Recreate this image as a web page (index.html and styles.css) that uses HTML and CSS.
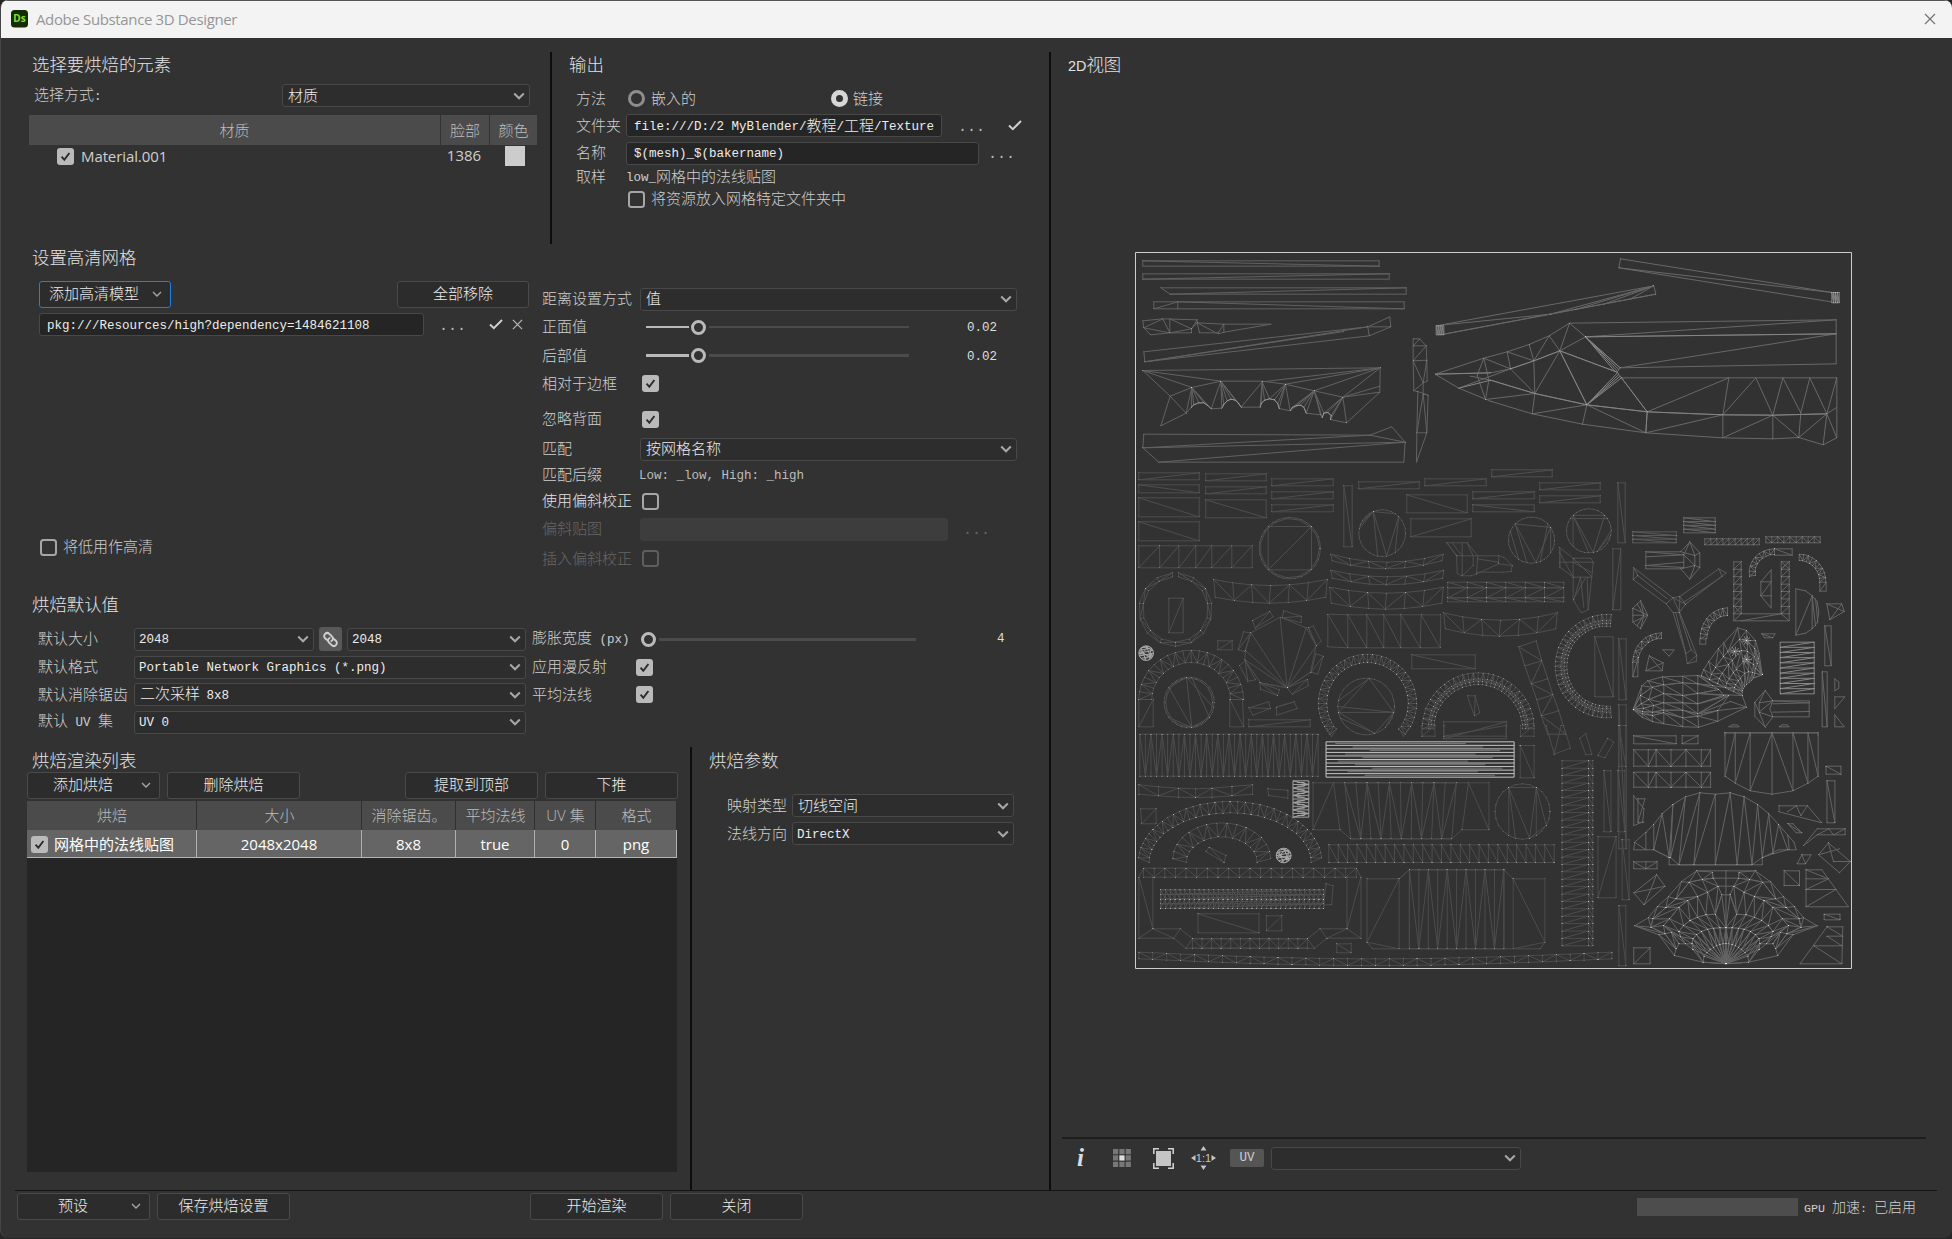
FILE: index.html
```html
<!DOCTYPE html>
<html lang="zh-CN">
<head>
<meta charset="utf-8">
<title>Adobe Substance 3D Designer</title>
<link rel="stylesheet" href="styles.css">
</head>
<body>
<svg class="defs" width="0" height="0">
  <symbol id="chev" viewBox="0 0 12 8"><path d="M1.2 1.5 6 6.3 10.8 1.5" fill="none" stroke="currentColor" stroke-width="2"/></symbol>
  <symbol id="chev-s" viewBox="0 0 10 6"><path d="M1 1 5 5 9 1" fill="none" stroke="currentColor" stroke-width="1.3"/></symbol>
  <symbol id="box-on" viewBox="0 0 17 17"><rect width="17" height="17" rx="3" fill="#bababa"/><path d="M4.6 8.6 7.3 11.8 12.4 5" fill="none" stroke="#2b2b2b" stroke-width="1.9"/></symbol>
  <symbol id="box-off" viewBox="0 0 17 17"><rect x="1" y="1" width="15" height="15" rx="2.5" fill="none" stroke="currentColor" stroke-width="2"/></symbol>
  <symbol id="tick" viewBox="0 0 14 11"><path d="M1 5.6 4.8 9.2 13 1" fill="none" stroke="currentColor" stroke-width="2"/></symbol>
  <symbol id="cross" viewBox="0 0 12 12"><path d="M1 1 11 11M11 1 1 11" fill="none" stroke="currentColor" stroke-width="1.3"/></symbol>
</svg>
<div class="window">
  <header class="titlebar">
    <svg class="logo" viewBox="0 0 17 18"><rect width="17" height="17.5" rx="3.5" fill="#152b00"/><text x="8.5" y="12.3" text-anchor="middle" font-family="Open Sans" font-weight="700" font-size="10" fill="#7ee22a">Ds</text></svg>
    <span class="title">Adobe Substance 3D Designer</span>
    <svg class="close"><use href="#cross"/></svg>
  </header>

  <main class="main">
    <section class="setup">
      <div class="top">
        <div class="elements">
          <h2>选择要烘焙的元素</h2>
          <div class="pick"><label>选择方式<b>:</b></label><div class="select"><span>材质</span><svg><use href="#chev"/></svg></div></div>
          <div class="materials">
            <div class="th">材质</div><div class="th">脸部</div><div class="th">颜色</div>
            <div class="mat"><svg class="cb"><use href="#box-on"/></svg>Material.001</div><div class="num">1386</div><div class="swatch"></div>
          </div>
        </div>
        <div class="vline"></div>
        <div class="output">
          <h2>输出</h2>
          <div class="form">
            <label>方法</label>
            <div class="cell radios"><i class="radio"></i><span>嵌入的</span><i class="radio on"></i><span>链接</span></div>
            <label>文件夹</label>
            <div class="cell"><div class="input folder"><b>file:///D:/2 MyBlender/</b>教程<b>/</b>工程<b>/Texture</b></div><span class="dots d1">...</span><svg class="tick t1"><use href="#tick"/></svg></div>
            <label>名称</label>
            <div class="cell"><div class="input name"><b>$(mesh)_$(bakername)</b></div><span class="dots d2">...</span></div>
            <label>取样</label>
            <div class="cell sample"><b>low_</b>网格中的法线贴图</div>
            <label></label>
            <div class="cell check"><svg class="cb"><use href="#box-off"/></svg><span>将资源放入网格特定文件夹中</span></div>
          </div>
        </div>
      </div>

      <div class="high">
        <div class="meshes">
          <h2>设置高清网格</h2>
          <div class="bar"><button class="btn focus"><span>添加高清模型</span><svg><use href="#chev-s"/></svg></button><button class="btn">全部移除</button></div>
          <div class="entry"><div class="input"><b>pkg:///Resources/high?dependency=1484621108</b></div><span class="dots">...</span><svg class="tick"><use href="#tick"/></svg><svg class="cross"><use href="#cross"/></svg></div>
          <div class="aslow"><svg class="cb"><use href="#box-off"/></svg>将低用作高清</div>
        </div>
        <div class="params">
          <label>距离设置方式</label><div class="cell"><div class="select"><span>值</span><svg><use href="#chev"/></svg></div></div>
          <label>正面值</label><div class="cell"><div class="slider"><i class="fill"></i><i class="knob"></i><i class="rest"></i></div><b class="val">0.02</b></div>
          <label>后部值</label><div class="cell"><div class="slider thick"><i class="fill"></i><i class="knob"></i><i class="rest"></i></div><b class="val">0.02</b></div>
          <label>相对于边框</label><div class="cell box"><svg class="cb"><use href="#box-on"/></svg></div>
          <label class="low">忽略背面</label><div class="cell box low"><svg class="cb"><use href="#box-on"/></svg></div>
          <label>匹配</label><div class="cell"><div class="select"><span>按网格名称</span><svg><use href="#chev"/></svg></div></div>
          <label>匹配后缀</label><div class="cell"><b class="suffix">Low: _low, High: _high</b></div>
          <label class="lit">使用偏斜校正</label><div class="cell box"><svg class="cb"><use href="#box-off"/></svg></div>
          <label class="off">偏斜贴图</label><div class="cell"><div class="input disabled"></div><span class="dots off">...</span></div>
          <label class="off">插入偏斜校正</label><div class="cell box off"><svg class="cb"><use href="#box-off"/></svg></div>
        </div>
      </div>

      <div class="defaults">
        <h2>烘焙默认值</h2>
        <div class="grid">
          <label>默认大小</label>
          <div class="cell size"><div class="select"><b>2048</b><svg><use href="#chev"/></svg></div>
            <button class="link"><svg viewBox="0 0 17 17" fill="none" stroke="#d0d0d0" stroke-width="1.9" stroke-linecap="round"><path d="M5.500 9.300 3 7.200a3 3 0 0 1 .1-4.300 3 3 0 0 1 4.200 0L10 5.500a2.700 2.700 0 0 1-.6 4.500"/><path d="M11.500 7.700 14 9.800a3 3 0 0 1-.1 4.300 3 3 0 0 1-4.200 0L7 11.500A2.700 2.700 0 0 1 7.600 7"/></svg></button>
            <div class="select"><b>2048</b><svg><use href="#chev"/></svg></div></div>
          <label>膨胀宽度<b> (px)</b></label>
          <div class="cell"><div class="slider dil"><i class="knob"></i><i class="rest"></i></div><b class="val">4</b></div>
          <label>默认格式</label><div class="cell"><div class="select"><b>Portable Network Graphics (*.png)</b><svg><use href="#chev"/></svg></div></div>
          <label>应用漫反射</label><div class="cell"><svg class="cb"><use href="#box-on"/></svg></div>
          <label>默认消除锯齿</label><div class="cell"><div class="select"><span>二次采样<b> 8x8</b></span><svg><use href="#chev"/></svg></div></div>
          <label>平均法线</label><div class="cell"><svg class="cb"><use href="#box-on"/></svg></div>
          <label>默认<b> UV </b>集</label><div class="cell"><div class="select"><b>UV 0</b><svg><use href="#chev"/></svg></div></div>
        </div>
      </div>

      <div class="render">
        <div class="list">
          <h2>烘焙渲染列表</h2>
          <div class="bar"><button class="btn menu"><span>添加烘焙</span><svg><use href="#chev-s"/></svg></button><button class="btn">删除烘焙</button><button class="btn up">提取到顶部</button><button class="btn">下推</button></div>
          <div class="table">
            <div class="tr head"><div>烘焙</div><div>大小</div><div>消除锯齿。</div><div>平均法线</div><div>UV 集</div><div>格式</div></div>
            <div class="tr row"><div><svg class="cb"><use href="#box-on"/></svg>网格中的法线贴图</div><div>2048x2048</div><div>8x8</div><div>true</div><div>0</div><div>png</div></div>
          </div>
        </div>
        <div class="vline"></div>
        <div class="bakeparams">
          <h2>烘焙参数</h2>
          <div class="pair"><label>映射类型</label><div class="select"><span>切线空间</span><svg><use href="#chev"/></svg></div></div>
          <div class="pair"><label>法线方向</label><div class="select"><b>DirectX</b><svg><use href="#chev"/></svg></div></div>
        </div>
      </div>
    </section>

    <div class="vline side"></div>

    <section class="view">
      <h2><span class="dim">2D</span>视图</h2>
      <svg id="uv" class="uv" width="730" height="730" viewBox="0 0 730 730">
        <marker id="node" markerUnits="userSpaceOnUse" markerWidth="3" markerHeight="3" refX="1.500" refY="1.500"><rect width="3" height="3" fill="#fff" fill-opacity=".2"/></marker>
      </svg>
      <div class="tools">
        <span class="info">i</span>
        <svg class="ic-grid" viewBox="0 0 19 19"><g fill="#777"><path d="M0 0h5.500v5.500H0zM6.700 0h5.500v5.500H6.700zM13.400 0h5.500v5.500h-5.500zM0 6.700h5.500v5.500H0zM13.400 6.700h5.500v5.500h-5.500zM0 13.400h5.500v5.500H0zM6.700 13.400h5.500v5.500H6.700zM13.400 13.400h5.500v5.500h-5.500z"/></g><path d="M6.700 6.700h5.500v5.500H6.700z" fill="#e0e0e0"/></svg>
        <svg class="ic-fit" viewBox="0 0 21 21"><path d="M3 3h15v15H3z" fill="#c4c4c4"/><path d="M.8 6V.8H6M15 .8h5.200V6M20.200 15v5.200H15M6 20.200H.8V15" fill="none" stroke="#d4d4d4" stroke-width="1.500"/></svg>
        <svg class="ic-one" viewBox="0 0 25 24"><path d="M12.500 0l3 4.500h-6zM12.500 24l3-4.500h-6zM0 12l4.500-3v6zM25 12l-4.500-3v6z" fill="#c4c4c4"/><text x="12.500" y="16" text-anchor="middle" font-family="Liberation Sans" font-size="11" fill="#c4c4c4">1:1</text></svg>
        <span class="uvbtn">UV</span>
        <div class="select"><span></span><svg><use href="#chev"/></svg></div>
      </div>
    </section>
  </main>

  <footer class="footer">
    <button class="btn menu"><span>预设</span><svg><use href="#chev-s"/></svg></button>
    <button class="btn">保存烘焙设置</button>
    <button class="btn start">开始渲染</button>
    <button class="btn">关闭</button>
    <div class="progress"></div>
    <span class="gpu"><b>GPU </b>加速<b>: </b>已启用</span>
  </footer>
</div>
<script src="uv.js"></script>
</body>
</html>
```
FILE: styles.css
```css
* { box-sizing: border-box; }
body {
  margin: 0; width: 1952px; height: 1239px; overflow: hidden; background: #262626;
  font: 300 15px/20px "Liberation Sans", "Noto Sans CJK SC", sans-serif; color: #cfcfcf;
}
.defs { position: absolute; }
.window { height: 1238px; background: #323232; border-radius: 8px; overflow: hidden; border-left: 1px solid #454545; display: flex; flex-direction: column; }
b { font: 400 12.5px/20px "Liberation Mono", monospace; white-space: pre; }
h2 { margin: 0; height: 26px; font-size: 17.4px; line-height: 26px; font-weight: 300; color: #e2e2e2; }
svg { display: block; flex: none; }
label { white-space: nowrap; }

.titlebar { height: 38px; flex: none; background: #f3f3f3; border-top: 1px solid #555; display: flex; align-items: center; padding: 0 16px 2px 10px; }
.logo { width: 17px; height: 18px; }
.title { margin-left: 8px; font: 400 15px/20px "Open Sans", "Noto Sans", sans-serif; color: #969696; letter-spacing: -.36px; flex: 1; }
.close { width: 12px; height: 12px; color: #777; }

.main { display: flex; height: 1152px; flex: none; }
.setup { width: 1048px; flex: none; }
.vline { width: 2px; background: #0d0d0d; flex: none; }
.side { margin-top: 14px; }

.select, .input { height: 23px; border: 1px solid #484848; border-radius: 3px; background: #2d2d2d; color: #ececec; display: flex; align-items: center; white-space: nowrap; }
.select { justify-content: space-between; padding: 0 4px 0 5px; }
.select svg { width: 12px; height: 8px; color: #a8a8a8; }
.select b { margin-left: -1px; }
.select > b, .input > b, .cell > b { padding-top: 2px; }
.input { background: #252525; padding-left: 7px; }
.btn { width: 132px; height: 27px; padding: 0 0 1px; border: 1px solid #4a4a4a; border-radius: 3px; background: #2c2c2c; color: #ececec; font: inherit; display: flex; align-items: center; justify-content: center; flex: none; }
.btn svg { width: 10px; height: 6px; color: #a8a8a8; }
.btn.focus { border-color: #1c80e4; justify-content: space-between; padding: 0 8px 1px 9px; }
.btn.menu { justify-content: flex-end; padding-right: 8px; }
.btn.menu svg { margin-left: 28px; }
.cb { width: 17px; height: 17px; color: #a6a6a6; }
.tick { width: 14px; height: 11px; color: #d0d0d0; }
.dots { font: 400 15px/20px "Liberation Mono", monospace; color: #bbb; width: 27px; padding-top: 4px; }
.cell { display: flex; align-items: center; }

.top { height: 206px; padding-top: 14px; display: flex; }
.elements { width: 549px; padding-left: 27px; }
.elements h2 { padding-left: 4px; }
.pick { display: flex; align-items: center; margin-top: 6px; height: 23px; padding-left: 6px; }
.pick label { width: 248px; }
.pick .select { width: 248px; }
.materials { margin-top: 8px; display: grid; grid-template-columns: 411px 48px 47px; grid-template-rows: 30px 22px; width: 509px; column-gap: 1px; padding-left: 1px; font-family: "Open Sans", "Noto Sans CJK SC", sans-serif; }
.th { background: #4b4b4b; line-height: 30px; text-align: center; color: #bdbdbd; }
.mat { display: flex; align-items: center; padding: 0 0 0 28px; gap: 7px; font-weight: 400; letter-spacing: -.1px; line-height: 20px; }
.num { font-weight: 400; text-align: center; line-height: 21px; padding-right: 2px; }
.swatch { width: 20px; height: 20px; margin: 1px 0 0 15px; background: #ccc; }

.output { padding-left: 17px; }
.output h2 { margin-bottom: 7px; }
.form { display: grid; grid-template-columns: 50px 420px; grid-template-rows: 27px 27px 28px 20px 24px; align-items: center; padding-left: 7px; }
.radio { width: 17px; height: 17px; border: 3px solid #8e8e8e; border-radius: 50%; margin: 0 6px 0 2px; }
.radio.on { border: 5px solid #d6d6d6; margin-left: 135px; margin-right: 5px; }
.folder { width: 316px; }
.form .name { width: 353px; }
.d1 { margin-left: 16px; }
.t1 { margin-left: 23px; }
.d2 { margin-left: 9px; }
.check { padding-left: 2px; gap: 6px; }

.high { height: 347px; display: flex; }
.meshes { width: 541px; }
.meshes h2 { padding-left: 31px; margin-top: 1px; }
.meshes .bar { display: flex; justify-content: space-between; margin: 10px 13px 0 38px; }
.entry { display: flex; align-items: center; margin: 5px 0 0 38px; height: 23px; }
.entry .input { width: 385px; }
.entry .dots { margin-left: 15px; }
.entry .tick { margin-left: 23px; }
.cross { width: 11px; height: 11px; color: #bbb; margin-left: 9px; }
.aslow { display: flex; align-items: center; gap: 6px; margin: 201px 0 0 39px; }
.params { display: grid; grid-template-columns: 98px 378px; grid-template-rows: 28px 28px 29px 27px 41px 22px 30px 22px 34px 25px; align-items: center; align-content: start; padding-top: 41px; }
.params .select { width: 377px; }
.params .box { padding-left: 2px; }
.params .low { padding-top: 3px; }
.params .input { width: 308px; }
.params .disabled { background: #3d3d3d; border-color: #3d3d3d; }
.params .off { color: #666; }
.params .dots.off { margin-left: 15px; }
.box.off .cb { color: #5e5e5e; }
.params .lit { color: #e4e4e4; }
.suffix { color: #bdbdbd; margin-left: -1px; }
.slider { width: 263px; margin-left: 6px; display: flex; align-items: center; }
.slider i { height: 2px; background: #4b4b4b; }
.slider.thick i { height: 3px; }
.slider i.fill { width: 43px; background: #bababa; }
.slider i.knob { width: 15px; height: 15px; border: 3px solid #bababa; border-radius: 50%; background: none; margin: 0 3px 0 2px; }
.slider i.rest { flex: 1; }
.val { margin-left: 58px; color: #ddd; }

.defaults { height: 156px; padding-top: 1px; }
.defaults h2 { padding-left: 31px; margin-bottom: 7px; }
.defaults .grid { display: grid; grid-template-columns: 96px 398px 104px 400px; grid-template-rows: 28px 28px 27px 28px; align-items: center; padding-left: 37px; }
.defaults .select { width: 392px; }
.defaults .size .select { width: 180px; }
.defaults .size .select:last-child { width: 179px; }
.link { width: 23px; height: 24px; margin: 0 5px; padding: 3px; border: 0; border-radius: 3px; background: #585858; }
.link svg { width: 17px; height: 17px; }
.slider.dil { width: 277px; margin-left: 3px; }
.slider.dil i.rest { height: 3px; }
.defaults .cell > .val { margin-left: 81px; padding: 0; }

.render { display: flex; height: 443px; }
.list { width: 689px; padding-left: 26px; }
.list h2 { padding: 1px 0 0 5px; height: 25px; }
.list .bar { display: flex; gap: 7px; }
.list .btn { width: 133px; }
.list .up { margin-left: 98px; }
.table { margin-top: 2px; width: 650px; height: 371px; background: #252525; font: 400 15px/28px "Open Sans", "Noto Sans CJK SC", sans-serif; }
.tr { display: grid; grid-template-columns: 170px 165px 94px 79px 61px 81px; text-align: center; }
.tr.head { color: #bdbdbd; background: #4b4b4b; line-height: 29px; font-weight: 300; }
.tr.head div { border-right: 1px solid #303030; padding-left: 1px; white-space: nowrap; }
.tr.row { color: #fff; background: #656565; border-bottom: 1px solid #b4b4b4; height: 28px; }
.tr.row div { border-right: 1px solid #b0b0b0; display: flex; align-items: center; justify-content: center; white-space: nowrap; }
.tr.row div:first-child { justify-content: flex-start; padding-left: 4px; gap: 6px; }
.bakeparams { padding: 0 0 0 17px; }
.bakeparams h2 { padding-top: 1px; margin-bottom: 21px; }
.pair { display: flex; align-items: center; height: 23px; padding-left: 18px; margin-bottom: 5px; }
.pair label { width: 65px; }
.pair .select { width: 222px; }

.view { flex: 1; padding: 14px 26px 0 11px; }
.view h2 { padding-left: 6px; }
.dim { font-size: 14.4px; }
.uv { margin: 167px 0 0 68px; }
.tools { margin-top: 162px; border-top: 2px solid #1e1e1e; height: 40px; display: flex; align-items: center; }
.info { width: 14px; margin-left: 15px; font: italic 700 25px/24px "Liberation Serif", serif; color: #ddd; }
.ic-grid { width: 18px; height: 18px; margin-left: 22px; }
.ic-fit { width: 21px; height: 21px; margin-left: 22px; }
.ic-one { width: 25px; height: 24px; margin-left: 17px; }
.uvbtn { width: 34px; height: 18px; margin-left: 14px; border-radius: 2px; background: #555; font: 400 12.5px/18px "Liberation Mono", monospace; text-align: center; }
.tools .select { width: 250px; margin-left: 7px; }

.footer { margin: 0 15px 0 14px; border-top: 1px solid #151515; height: 46px; display: flex; align-items: flex-start; padding: 2px 22px 0 2px; }
.footer .btn { width: 133px; margin-right: 7px; }
.footer .btn.menu svg { margin-left: 43px; }
.footer .start { margin-left: 233px; }
.progress { width: 161px; height: 18px; margin: 5px 6px 0 auto; background: #4d4d4d; }
.gpu { margin: 4px -1px 0 0; width: 112px; white-space: nowrap; font-size: 14px; }
.gpu b { font-size: 11.67px; }
```
FILE: uv.js
```js
// UV layout wireframe. Every sheet has its own origin and scale.
const NS = "http://www.w3.org/2000/svg";
const root = document.getElementById("uv");
let d = "";
const r1 = v => Math.round(v * 10) / 10;
const line = (...p) => { d += "M" + p.map(r1).join(" "); };
const raw = s => { d += s; };
const box = (x1, y1, x2, y2, k) => {
  d += `M${x1} ${y1}H${x2}V${y2}H${x1}z`;
  if (k === "/") line(x1, y2, x2, y1);
  if (k === "\\") line(x1, y1, x2, y2);
};
// triangulated strip between two equally long point lists
const strip = (a, b, flip) => {
  line(...a.flat()); line(...b.flat());
  a.forEach((p, i) => {
    line(...p, ...b[i]);
    if (i) (flip === 2 ? i % 2 : flip) ? line(...a[i - 1], ...b[i]) : line(...b[i - 1], ...p);
  });
};
const lerp = (x1, y1, x2, y2, n) => Array.from({ length: n + 1 }, (_, i) => [x1 + (x2 - x1) * i / n, y1 + (y2 - y1) * i / n]);
const hstrip = (x1, y1, x2, y2, n, f) => strip(lerp(x1, y1, x2, y1, n), lerp(x1, y2, x2, y2, n), f);
const vstrip = (x1, y1, x2, y2, n, f) => strip(lerp(x1, y1, x1, y2, n), lerp(x2, y1, x2, y2, n), f);
const ring = (cx, cy, rx, ry, a, b, n) => Array.from({ length: n + 1 }, (_, i) => {
  const t = (a + (b - a) * i / n) * Math.PI / 180;
  return [cx + rx * Math.cos(t), cy + ry * Math.sin(t)];
});
const band = (cx, cy, ro, ri, a, b, n, f, k = 1) => strip(ring(cx, cy, ro, ro * k, a, b, n), ring(cx, cy, ri, ri * k, a, b, n), f);
const disc = (cx, cy, rx, ry, n, chords = []) => {
  const p = ring(cx, cy, rx, ry, 0, 360, n);
  line(...p.flat());
  chords.forEach(([i, j]) => line(...p[i], ...p[j]));
};
const fan = (x, y, pts) => pts.forEach(p => line(x, y, ...p));
const sheet = (x, y, sx, sy, tone, nodes = true) => {
  const p = document.createElementNS(NS, "path");
  p.setAttribute("d", d);
  p.setAttribute("transform", `translate(${x + .5} ${y + .5}) scale(${sx} ${sy})`);
  p.setAttribute("vector-effect", "non-scaling-stroke");
  p.setAttribute("fill", "none");
  p.setAttribute("stroke", tone);
  if (nodes) ["start", "mid", "end"].forEach(m => p.setAttribute("marker-" + m, "url(#node)"));
  root.append(p);
  d = "";
};
const T = 1 / 3, W = 730 / 1568;

// long blades
box(37, 46, 746, 62, "\\"); box(37, 85, 776, 101, "/");
raw("M91 127H827V146H119zM119 146 827 127M70 169H821V190H70zM70 190 142 169V190M142 169 821 190");
raw("M37 226 97 220 200 223V232L280 236H422L281 260 263 265 200 232 183 250V262H118L60 268 40 247zM40 247 97 220 118 262V220L183 250 200 223M118 262 183 250M200 232 207 262H263L280 236V260M40 247 118 262");
raw("M40 319 712 244 778 214 781 244 716 271 43 349zM43 349 712 244 716 271M712 244H781M43 349 640 258");
const base = [[91,541],[167,503],[183,485],[190,478],[205,472],[220,472],[232,480],[242,490],[274,488],[280,477],[290,466],[302,461],[314,464],[324,473],[332,485],[389,485],[392,474],[402,464],[417,460],[432,463],[442,475],[446,489],[479,496],[486,485],[498,481],[510,479],[520,485],[527,503],[570,508],[575,517],[580,503],[592,501],[602,510],[600,522],[648,532]];
line(...base.flat());
fan(184, 426, base.slice(1, 8)); fan(271, 407, base.slice(7, 15)); fan(395, 409, base.slice(14, 19));
fan(465, 416, base.slice(18, 23)); fan(551, 436, base.slice(22, 31)); fan(637, 455, base.slice(30, 35));
raw("M37 375 749 367 748 440 648 532M37 375 119 452 184 426 271 407H395L465 416 551 436 637 455 749 367M37 375 184 426M37 375 271 407M749 367 395 409M749 367 465 416M749 367 551 436M91 541 119 452 167 503M637 455 748 422M637 455 748 440");
raw("M40 566 718 569 784 544 824 590 820 650H85L37 607zM37 607 718 569 824 590M37 607 824 590M85 650 824 590");
raw("M848 280H867L887 301 889 344 890 407 878 412V446L893 449 889 562 858 650 859 562 862 438 850 436 848 346zM848 301H887M848 301 867 281M848 346 887 301M848 346 889 344M848 346 878 412 889 344M850 436 878 412M862 438 893 449M878 446 859 562H889L878 446");
sheet(0, 0, T, T, "#626262");

// bright rims of the small arches
line(...base.slice(2, 8).flat()); line(...base.slice(8, 15).flat()); line(...base.slice(15, 22).flat()); line(...base.slice(22, 28).flat()); line(...base.slice(29, 34).flat());
sheet(0, 0, T, T, "#929292");

// sword
raw("M-163 241 490 121 496 146 -140 266M-140 238 180 206 490 121M255 192 490 121M340 176 490 121M415 163 490 121M-140 266 180 206 496 146");
raw("M390 40 1025 141M385 67 1022 169M390 40 385 67 1025 141");
raw("M-166 386 -20 338 50 319 116 297 176 271 237 233 285 274 389 367 380 380 393 397 470 499 466 562 276 536 125 505 0 467 -95 428zM-20 338 60 370 50 319 130 346 116 297M130 346 176 271 208 316 237 233M208 316 285 274M60 370 130 346 208 316 380 380 M60 370 133 444 130 346M133 444 208 316 289 478M0 404 133 444 289 478 470 499 697 508 847 509 1009 505 1037 487M-95 428 60 370M-166 386 0 382 60 370M-20 338 -40 390 -15 462M-20 338 -5 404 -15 462M0 404 -60 392M-15 462 133 444 125 505 289 478 276 536M289 478 466 562 697 508M237 233 1037 223V355L389 367 1037 265 285 274 1037 223M393 397H1039V577L998 598 925 576 847 580 697 577 466 562M470 499 715 397 697 508 796 397 847 509 877 397 931 502 958 397 1009 505 1039 397M697 508V577L847 509V580M847 509 925 576 1009 505 998 598M931 502 925 576M1009 505 1039 577");
sheet(360, 0, T, T, "#686868");
hstrip(-163, 241, -140, 268, 4, 1); hstrip(1024, 141, 1046, 172, 4, 1);
for (let i = 0; i < 4; i++) { line(285, 274, 389 - i * 5, 367 + i * 4); line(289, 478, 393 - i * 4, 397 - i * 5); }
raw("M-166 386 0 382M-95 428 0 404 133 444 289 478 470 499 697 508 847 509 1009 505M208 316 289 478M60 370 130 346 208 316 380 380M285 274 1037 265M470 499 466 562M393 397 470 499");
sheet(360, 0, T, T, "#858585");

// middle left
box(25, 22, 206, 43, "/"); box(226, 25, 407, 46, "/"); box(424, 40, 608, 61, "/"); box(685, 49, 866, 70, "/"); box(883, 40, 1067, 61, "/");
box(25, 58, 206, 82, "\\"); box(226, 64, 407, 85, "/"); box(424, 79, 608, 100, "/"); box(424, 118, 608, 139, "/");
box(25, 97, 206, 154, "\\"); box(226, 103, 407, 157, "\\"); box(25, 169, 206, 226, "\\"); box(829, 88, 1010, 142, "\\"); box(841, 160, 1022, 214, "/");
box(640, 61, 665, 244, "\\"); box(844, 568, 1034, 610, "\\"); box(262, 526, 305, 553, "/"); box(355, 763, 539, 784, "/"); box(115, 398, 158, 502, "/"); box(940, 769, 1127, 820, "/");
strip([[25,241],[87,241],[145,241],[196,241],[244,241],[304,241],[365,241]], [[25,307],[88,307],[145,307],[196,307],[244,307],[304,307],[365,307]], 0);
disc(478, 248, 92, 92, 32, [[4,12],[20,28],[12,20],[28,4],[28,12]]); disc(478, 248, 89, 89, 15);
disc(755, 203, 70, 70, 32, [[22,7],[22,18],[22,17],[28,7],[28,5],[22,27],[22,19],[22,9]]);
disc(176, 711, 75, 76, 30, [[18,22],[18,7],[22,7],[12,7],[23,3],[22,1],[3,7]]); disc(176, 711, 70, 73, 20);
disc(707, 723, 85, 85, 30, [[14,1],[1,23],[23,14],[15,1],[23,16],[13,6],[14,6],[6,1],[1,4]]);
band(135, 432, 110, 98, -85, 265, 14, 2);
band(182, 702, 157, 118, 180, 360, 20, 2, .94); raw("M25 702V784H68L68 702M25 784 68 702M298 702V784H340L336 702M340 784 298 702");
band(711, 713, 147, 122, 140, 400, 46, 2); band(1043, 790, 168, 133, 180, 360, 34, 2); band(1043, 790, 150, 142, 180, 360, 34, 1);
const arc = (x1, x2, y, sag, h, n) => { const f = (o) => Array.from({ length: n + 1 }, (_, i) => { const t = i / n; return [x1 + (x2 - x1) * t + (o ? (t < .5 ? 4 : -4) : 0), y + sag * 4 * t * (1 - t) + o]; }); strip(f(0), f(h), 2); };
arc(250, 590, 342, 18, 53, 6); arc(601, 938, 266, 24, 20, 6); arc(601, 940, 314, 20, 24, 6); arc(598, 938, 365, 18, 48, 6);
strip([[592,446],[652,448],[709,448],[760,448],[811,448],[872,448],[931,448]], [[592,544],[652,547],[709,547],[760,547],[811,547],[869,547],[929,547]], 1);
arc(940, 1280, 442, 22, 48, 6); raw("M949 232H1010L1042 271 1038 325 1022 331H992L980 323 978 271zM949 232 980 271M965 232 995 271M995 232V331M980 271H1105L1104 295 1037 326M1040 280 1104 290M1010 232 1028 271V300L995 331M1105 271 1120 275 1145 300 1142 318 1120 320H1037M1105 295 1145 300");
hstrip(952, 367, 1300, 397, 6, 0); hstrip(952, 350, 1300, 367, 6, 1); hstrip(952, 397, 1300, 409, 6, 1);
// scalloped disc with loose tabs
const rim = [[470,667],[390,652],[343,583],[345,555],[361,502],[449,455],[527,487],[557,541],[540,620],[470,667]];
line(...rim.flat()); fan(470, 667, rim);
raw("M366 465 418 438 428 454 374 488zM374 488 418 438M460 436 512 452V472L455 457zM455 457 512 452M534 487 548 481 572 527 558 541zM534 487 558 541M578 572 562 626 542 620 556 565zM578 572 542 620M470 667 531 641 533 661 485 686zM485 686 531 641M388 652 390 671 441 690 447 673zM388 652 441 690M344 586 327 600 352 647 375 643zM344 586 352 647M361 502 339 499 323 553 343 558zM361 502 323 553");
raw("M355 727 415 709 419 729 367 749zM355 727 419 729M437 725 491 709 500 729 439 749zM437 725 491 709M1010 691H1034L1048 742 1032 751zM1034 691 1032 751");
sheet(0, 220, T, T, "#4e4e4e");

// middle right, dim parts
box(4, 13, 185, 34, "/"); box(-53, 79, 131, 100, "/"); box(-53, 118, 131, 139, "\\"); box(148, 52, 329, 73, "/"); box(148, 91, 329, 112, "/");
box(382, 52, 404, 232, "\\"); box(367, 250, 391, 433, "/"); box(313, 514, 368, 694, "\\"); box(385, 520, 407, 703, "\\"); box(385, 718, 407, 1150, "\\");
disc(123, 224, 69, 69, 32, [[20,29],[20,7],[29,7],[20,9],[28,6],[29,3],[18,11]]);
disc(295, 196, 67, 66, 32, [[20,28],[20,7],[28,7],[20,8],[20,12],[0,6],[1,6],[19,29]]);
band(349, 602, 155, 120, 85, 275, 36, 2); band(349, 602, 138, 128, 85, 275, 36, 1);
strip([[85,544],[103,601],[122,655],[139,703],[152,751],[172,806]], [[137,526],[154,586],[172,640],[187,688],[205,736],[226,806]], 2);
raw("M208 247 248 278H301L308 290 305 322 293 433 272 442 248 403V335L208 305zM208 290H308M208 247V305M248 278V335H305L248 278M208 262 248 335M250 403 270 335 280 425M248 290 301 320M290 335 293 433M248 403 283 340");
sheet(360, 220, T, T, "#505050");
raw("M430 307 547 397 568 393 685 310 707 322 585 416 567 440 619 569 617 588 590 595 586 565 548 442 527 415 428 342zM430 307 442 330 530 400M442 330 428 342M527 415 547 397 585 416M548 442 567 440 568 393 585 416M547 397 567 440M685 310 695 333 580 410M556 442 586 565 602 553 619 569 590 595M565 440 602 553");
vstrip(427, 199, 557, 232, 3, 1);
sheet(360, 220, T, T, "#5a5a5a");

// middle right, lighter parts
vstrip(580, 157, 674, 202, 4, 1); hstrip(643, 220, 806, 238, 9, 0); hstrip(826, 214, 989, 232, 9, 2);
raw("M466 259H571L598 229 628 262V306L598 341 571 310H466zM466 274 580 268M466 300 580 290M466 259 580 268V306L466 300M571 259 613 270V300L571 310M598 229 613 270 628 262M598 341 613 300 628 306M580 268 613 300M598 229 580 268");
raw("M427 428 450 406 472 449 450 490 427 470zM427 428 472 449 427 470M440 415 460 449 440 480M450 406 460 449 450 490M427 449H460");
band(711, 520, 82, 62, 180, 270, 9, 2, 1.13); raw("M628 520V536H646V520");
band(513, 590, 86, 70, 180, 270, 8, 2, 1.02); raw("M427 580V634H442V580L427 634");
band(852, 320, 76, 58, 170, 270, 8, 2, .92); box(852, 250, 905, 269, "\\"); band(926, 350, 80, 62, 270, 360, 9, 2, 1.05); raw("M988 350V377H1007V350L988 377");
vstrip(730, 289, 752, 445, 7, 0); vstrip(872, 289, 896, 445, 7, 0); raw("M730 445V466H896V445M752 445H872M730 466 752 445 730 420M896 466 872 445M752 466 872 445M872 289 896 310M872 310 896 289");
raw("M842 313V428L811 391V349zM811 349H842L811 391H842M916 370 945 376 965 391 980 408 985 440 980 472 965 490 945 503 916 509zM916 509 965 391V490M965 391 975 480M975 400 982 470M1009 415H1054L1061 438 1018 463zM1054 415 1018 463M1009 415 1061 438M517 553H551L536 572zM476 571 518 592 515 616H466zM476 571 515 616M466 616 518 592M814 505H854L847 517H822zM814 505 847 517");
box(1003, 481, 1022, 601, "\\"); box(995, 619, 1010, 784, "\\"); raw("M1033 640 1045 650V668L1033 676zM1033 694H1063L1033 730zM1033 748V784H1061zM715 784 725 778H740L746 784zM866 784 876 778H890L896 784z");
const rib = [[[428,732],[454,661],[472,646],[515,634],[577,632],[622,630],[632,632]],[[428,732],[450,690],[485,665],[520,658],[577,652],[622,655],[665,660]],[[428,732],[452,715],[475,702],[520,684],[577,690],[622,684],[685,672]],[[428,732],[460,728],[490,720],[520,712],[577,712],[622,715],[700,690]],[[428,732],[455,738],[485,740],[520,734],[577,734],[622,745],[715,690]],[[428,732],[455,745],[485,750],[520,742],[577,757],[622,752],[682,735]],[[428,732],[455,755],[485,768],[520,775],[577,784],[625,785],[682,767]]];
for (let i = 1; i < rib.length; i++) strip(rib[i - 1], rib[i], 1);
raw("M682 767 768 725 755 690 715 672M682 735 768 725M622 684 755 690M622 745 720 708 768 725M665 660 755 675M632 632 715 672");
const outer = [[632,630],[640,612],[655,588],[684,549],[700,532],[742,487],[768,495],[795,525],[806,565],[815,628]];
const inner = [[755,690],[755,680],[756,675],[758,670],[762,664],[768,657],[776,650],[784,644],[790,637],[815,628]];
for (let k = 0; k < 5; k++) { const m = t => outer.map((p, i) => [p[0] + (inner[i][0] - p[0]) * t, p[1] + (inner[i][1] - p[1]) * t]); strip(m(k / 5), m((k + 1) / 5), k % 2); }
raw("M793 710 824 675 847 706H956V754H847L824 785 793 752zM806 712V740L847 754M824 675 806 712 847 706 806 740 824 785M847 706 838 730 847 754M793 710 806 740M847 715 956 712M847 740 956 738M847 706 956 712");
raw("M703 802H983V812M703 802V812M780 802V812M844 802V812M907 802V812");
sheet(360, 220, T, T, "#656565");
vstrip(869, 530, 971, 685, 10, 0);
[[733,558,14],[768,582,14],[768,525,13]].forEach(([x, y, r]) => fan(x, y, ring(x, y, r, r, 0, 360, 9)));
sheet(360, 220, T, T, "#858585");

// lower left
hstrip(20, 26, 403, 152, 32, 2);
raw("M392 172H770V313H712L690 340H473L450 313H392zM392 313 436 172 450 313M712 313 726 172 770 313");
strip(lerp(460, 172, 700, 172, 10), lerp(473, 340, 690, 340, 10), 2);
hstrip(426, 358, 910, 411, 24, 1); vstrip(927, 106, 984, 661, 25, 0); vstrip(984, 106, 993, 661, 25, 1);
strip([[18,178],[60,184],[103,188],[140,190],[175,188],[218,183],[262,178]], [[18,206],[60,211],[103,215],[140,216],[175,215],[218,211],[262,206]], 2);
disc(842, 258, 59, 83, 24, [[16,20],[16,5],[20,5],[20,4],[16,7],[16,8],[20,2],[5,2]]);
strip(ring(214, 410, 197, 182, 184, 356, 36), ring(214, 410, 174, 148, 180, 360, 36), 2);
strip(ring(196, 400, 105, 108, 180, 360, 15), ring(196, 410, 76, 76, 180, 360, 15), 2);
hstrip(28, 428, 485, 455, 20, 2); raw("M28 428 18 455V638L48 610V455M485 428 495 455V638L465 610V455M18 455 48 610M495 455 465 610M48 610H107L133 640H380L407 610H465M18 638H93L107 610M48 610 93 638 119 668H395L422 638H495M407 610 422 638M465 610 422 638M133 640 119 668M380 640 395 668");
hstrip(133, 640, 380, 668, 12, 2); box(145, 565, 276, 622, "\\"); box(292, 571, 325, 616, "/"); box(443, 655, 474, 682, "\\"); raw("M420 475 435 481 432 538H415zM169 365 205 390 201 411 162 378zM169 365 201 411");
raw("M508 460H577L599 433H802L822 460H890V650L880 670H520L508 650zM508 650 577 460V670M822 460 890 650 822 670zM508 650 577 670M577 460 599 433V670M802 433V670");
strip(lerp(599, 433, 802, 433, 10), lerp(599, 670, 802, 670, 10), 2);
const wave = o => Array.from({ length: 35 }, (_, i) => [18 + 1016 * i / 34, 680 + 20 * Math.sin(Math.PI * i / 34) + o]);
strip(wave(0), wave(20), 2);
box(837, 60, 867, 157, "\\"); box(1017, 136, 1032, 319, "\\"); box(1047, 136, 1062, 319, "\\"); box(1004, 334, 1043, 517, "/"); box(1056, 343, 1071, 523, "\\"); box(1049, 541, 1064, 721, "\\"); box(1049, 0, 1064, 122, "\\");
raw("M295 190 338 194V218L297 210zM22 250H55V295H24zM24 295 55 250M965 38 978 25 991 86 978 88zM1025 38 1038 50 1019 97 1004 90zM673 0V32H807V0L673 32M838 0V32H867V0L838 32M626 0V32H654V0L626 32M893 0 910 86 945 68 930 0M910 86 925 0M422 8 432 32 443 10M576 8 586 32 597 10");
sheet(0, 480, W, T, "#4c4c4c");
vstrip(65, 493, 415, 549, 4, 0); hstrip(65, 493, 415, 521, 34, 1); hstrip(65, 521, 415, 549, 34, 0);
sheet(0, 480, W, T, "#505050");

// dense horizontal slats
for (let i = 0; i < 10; i++) { const y = 54 + i * 10.6, o = i * 37 % 90; line(440 + o, y, 720 + o, y); }
sheet(0, 480, W, T, "#757575", false);
box(420, 49, 824, 155);
for (let i = 1; i < 10; i++) line(420, 49 + i * 10.6, 824, 49 + i * 10.6);
sheet(0, 480, W, T, "#c4c4c4", false);
vstrip(349, 166, 383, 275, 10, 2); for (let i = 0; i < 10; i++) line(358, 171 + i * 11, 374, 171 + i * 11);
sheet(0, 480, W, T, "#a2a2a2", false);

// small shaded spheres
const knots = [[0,7],[1,6],[15,8],[14,9],[13,10],[2,12],[4,10],[3,14],[5,0],[9,2],[11,15],[8,1],[7,13]];
disc(47, 563, 22, 22, 16, knots); sheet(0, 220, T, T, "#a8a8a8", false);
disc(329, 390, 16, 22, 16, knots); sheet(0, 480, W, T, "#a8a8a8", false);

// lower right
box(1081, 31, 1172, 55, "\\"); box(1185, 31, 1219, 55, "/"); box(1494, 122, 1526, 146, "\\"); box(1496, 166, 1513, 292, "\\");
const cuts = [1081, 1112, 1129, 1161, 1193, 1226, 1246];
strip(cuts.map(x => [x, 73]), cuts.map(x => [x, 122]), 2);
strip(cuts.map(x => [x, 140]), cuts.map(x => [x, 185]), 2);
raw("M1277 22H1477V152L1455 173 1423 196 1378 206 1331 196 1299 173 1277 152zM1277 152 1299 22V173L1331 22V196L1378 22V206M1378 22 1423 196 1423 22 1455 173V22L1477 152");
const dome = [[1124,297],[1142,265],[1165,237],[1192,214],[1223,202],[1256,206],[1288,202],[1318,214],[1347,237],[1371,265],[1392,297]];
const foot = [[1124,373],[1157,396],[1160,396],[1178,418],[1210,418],[1256,418],[1303,418],[1335,418],[1357,396],[1380,385],[1412,373]];
strip(dome, foot, 0); raw("M1124 297 1107 320 1083 350 1081 373H1124L1157 396V418H1357V396L1392 373H1430L1425 350 1392 297M1107 320V373L1083 350M1412 330 1415 373M1081 211 1103 250 1100 290 1081 300zM1090 220H1105L1090 290H1103M1090 220V290M1081 409H1131V430H1081zM1081 409 1107 430 1131 409M1107 409V430M1393 241H1454L1485 292 1393 259zM1411 259 1430 241 1440 270 1454 241M1475 310H1535V328H1475L1445 361zM1475 328 1500 310 1510 328 1535 310M1412 295 1423 295 1442 322 1430 322zM1412 295 1442 322M1442 388 1462 388 1450 415 1432 415zM1442 388 1450 415M1499 352 1546 408 1523 442 1478 388zM1478 388 1523 370M1499 352 1510 408H1546M1130 448 1148 482 1103 538 1081 502zM1130 448 1115 500 1103 538M1081 502 1148 482");
box(1404, 436, 1437, 480, "\\"); box(1490, 566, 1524, 583, "\\"); box(1081, 667, 1116, 715, "/");
raw("M1451 433H1485L1542 544H1451zM1451 460H1499L1451 433M1451 492 1499 460M1451 492H1515L1451 544M1496 604H1530L1528 715H1438zM1496 632H1530L1496 604M1468 661H1528L1496 632M1468 661 1528 715");
// shell: left half of each rib, mirrored around the axis through the foot point
const half = [
  [[1168,690],[1135,628],[1083,601],[1112,577],[1132,543],[1155,514],[1183,469],[1216,436],[1250,440]],
  [[1172,670],[1148,625],[1118,605],[1122,580],[1150,546],[1172,520],[1200,470],[1228,462],[1252,458]],
  [[1178,655],[1162,620],[1145,600],[1158,580],[1178,545],[1197,525],[1218,513],[1240,500],[1262,482]],
  [[1192,655],[1182,634],[1178,618],[1188,600],[1202,585],[1218,575],[1236,568],[1256,566],[1270,508]],
  [[1208,672],[1206,655],[1208,640],[1216,628],[1226,618],[1240,611],[1252,608],[1266,607],[1279,607]],
  [[1230,710],[1232,692],[1238,682],[1245,673],[1252,666],[1259,660],[1266,657],[1273,655],[1279,655]],
];
half.forEach(h => h.reverse());
const mirror = h => h.map(([x, y]) => [2558 - x, y]);
for (let i = 1; i < half.length; i++) { strip(half[i - 1], half[i], i % 2); strip(mirror(half[i - 1]), mirror(half[i]), i % 2); }
fan(1279, 715, half[5]); fan(1279, 715, mirror(half[5])); fan(1279, 715, half[4]); fan(1279, 715, mirror(half[4]));
raw("M1168 690 1230 710 1279 715 1328 710 1391 690M1216 436H1344M1250 440V458H1306V440M1262 482H1296M1270 508H1288M1279 436V655");
sheet(0, 480, W, T, "#646464");

// tile border
box(5, 7, 721, 723); sheet(0, 0, 1, 1, "#cdcdcd", false);
```
